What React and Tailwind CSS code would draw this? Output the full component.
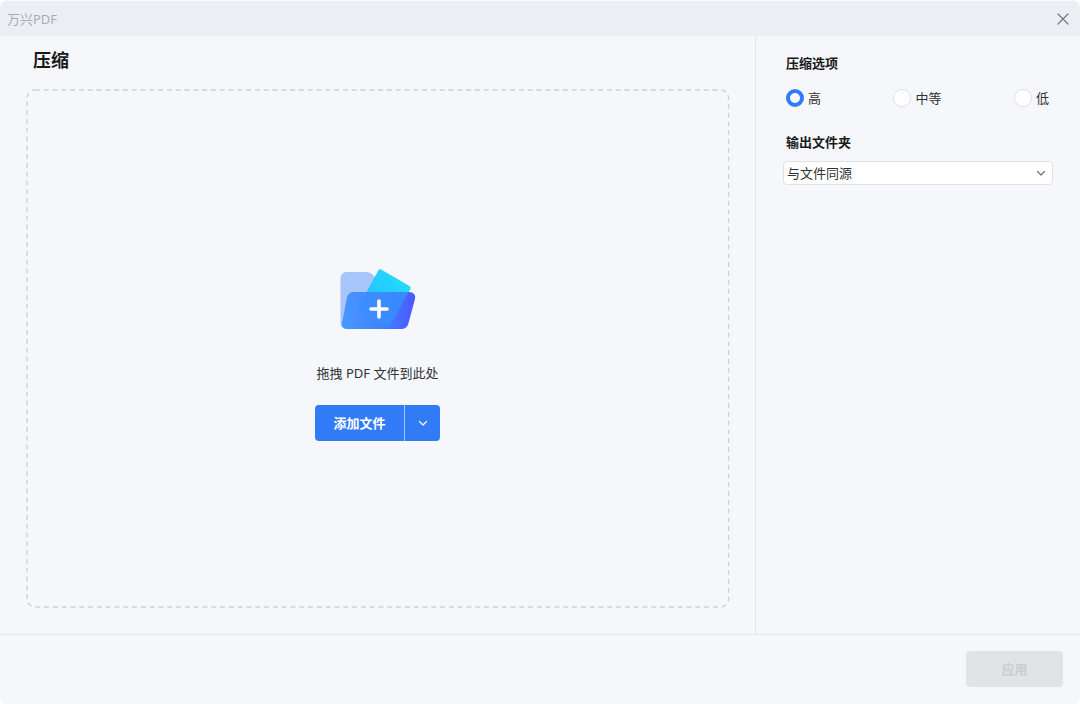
import React, { useState } from 'react';

const levels = [
    { value: 'high', label: '高' },
    { value: 'medium', label: '中等' },
    { value: 'low', label: '低' }
];

function FolderIcon() {
    return (
        <svg width="76" height="62" viewBox="0 0 76 62" fill="none" aria-hidden="true">
            <defs>
                <linearGradient id="sheet" x1="60" y1="8" x2="32" y2="34" gradientUnits="userSpaceOnUse">
                    <stop stopColor="#22dcfd" />
                    <stop offset="1" stopColor="#26c0fd" />
                </linearGradient>
                <linearGradient id="front" x1="4" y1="42" x2="72" y2="42" gradientUnits="userSpaceOnUse">
                    <stop stopColor="#4896ff" />
                    <stop offset="0.55" stopColor="#4183ff" />
                    <stop offset="1" stopColor="#4a5cff" />
                </linearGradient>
                <clipPath id="frontClip">
                    <path d="M13 24H70C74 24 76 27 75 31L68 56C67 59 65 61 62 61H6C3 61 1 58 2 55L7 29C8 26 10 24 13 24Z" />
                </clipPath>
            </defs>
            <path d="M7 4H25C29 4 31 5 33 7L44 18V61H7C3 61 0.5 58.5 0.5 55V10.500C0.500 6.500 3 4 7 4Z" fill="#a8c5fa" />
            <path d="M38.500 2Q39.500 0.800 41.500 1.800L69.500 18Q71.500 19 70.500 21L49 58Q48 60 46 59L19 44Q17 42 18 40Z" fill="url(#sheet)" />
            <path d="M13 24H69C73.500 24 76 27 75 31L68.500 55C67.500 59 65 61 61 61H7C3 61 1 58 2 54.500L7 29.500C8 26 10 24 13 24Z" fill="url(#front)" />
            <path d="M39 2L71 20L50 57Q48.500 60 46 58.500L18 41Z" fill="#3a8dff" fillOpacity="0.85" clipPath="url(#frontClip)" />
            <path d="M39 33V49M31 41H47" stroke="white" strokeWidth="3.600" strokeLinecap="round" />
        </svg>
    );
}

function Chevron({ className }) {
    return (
        <svg width="10" height="10" viewBox="0 0 10 10" fill="none" className={className} aria-hidden="true">
            <path d="M1.5 3.5L5 7L8.5 3.5" stroke="currentColor" strokeWidth="1.2" strokeLinecap="round" strokeLinejoin="round" />
        </svg>
    );
}

export default function App() {
    const [level, setLevel] = useState('high');

    return (
        <div className="flex min-h-screen flex-col overflow-hidden rounded-lg bg-[#f5f7fb] font-['Noto_Sans','Noto_Sans_CJK_SC',sans-serif] text-[13px] leading-5 text-[#303133]">
            <header className="flex h-9 items-center justify-between border-t border-[#fafbfc] bg-[#ebeff3] pr-[11px] pl-[7px]">
                <span className="text-[#a9adb1]">万兴PDF</span>
                <button type="button" aria-label="关闭" className="flex size-3 items-center justify-center text-[#71758b]">
                    <svg width="12" height="12" viewBox="0 0 12 12" fill="none">
                        <path d="M1 1L11 11M11 1L1 11" stroke="currentColor" strokeWidth="1.2" strokeLinecap="round" />
                    </svg>
                </button>
            </header>

            <div className="flex flex-1">
                <main className="flex flex-1 flex-col px-[26px] pt-3 pb-[27px]">
                    <h1 className="mb-[17px] pl-[7px] text-[18px] leading-6 font-bold text-[#1a1a1a]">压缩</h1>
                    <section className="relative flex flex-1 flex-col items-center justify-center pt-3">
                        <svg className="absolute inset-0 size-full overflow-visible text-[#ced1db]" aria-hidden="true">
                            <rect x="1" y="1" width="99.8%" height="99.8%" rx="8" fill="none" stroke="currentColor" strokeWidth="1.4" strokeDasharray="4.8 4" />
                        </svg>
                        <div className="relative flex flex-col items-center">
                            <FolderIcon />
                            <p className="mt-[33px]">拖拽 PDF 文件到此处</p>
                            <div className="mt-[22px] flex h-9 overflow-hidden rounded bg-[#327bf6] text-white">
                                <button type="button" className="w-[90px] border-r border-[#a3c4fb] font-bold">添加文件</button>
                                <button type="button" aria-label="更多添加方式" className="flex w-[35px] items-center justify-center">
                                    <Chevron />
                                </button>
                            </div>
                        </div>
                    </section>
                </main>

                <aside className="w-[325px] border-l border-[#e3e5e9] pt-[17px] pr-[27px] pl-[27px]">
                    <fieldset className="pl-[3px]">
                        <legend className="font-bold text-[#1a1a1a]">压缩选项</legend>
                        <div className="mt-[15px] flex justify-between pr-1">
                            {levels.map((item) => (
                                <label key={item.value} className="flex items-center gap-1">
                                    <input
                                        type="radio"
                                        name="level"
                                        value={item.value}
                                        checked={level === item.value}
                                        onChange={() => setLevel(item.value)}
                                        className="size-[18px] appearance-none rounded-full border border-[#dfe1e4] bg-white checked:border-4 checked:border-[#327bf6]"
                                    />
                                    {item.label}
                                </label>
                            ))}
                        </div>
                    </fieldset>

                    <label htmlFor="folder" className="mt-6 block pl-[3px] font-bold text-[#1a1a1a]">输出文件夹</label>
                    <div className="relative mt-[9px]">
                        <select id="folder" className="block h-6 w-full appearance-none rounded border border-[#dfe1e4] bg-white pr-6 pb-px pl-[3px]">
                            <option>与文件同源</option>
                        </select>
                        <Chevron className="pointer-events-none absolute top-[7px] right-[7px] text-[#707276]" />
                    </div>
                </aside>
            </div>

            <footer className="flex h-[70px] items-start justify-end border-t border-[#e3e5e9] pt-4 pr-[17px]">
                <button type="button" disabled className="h-9 w-[97px] rounded bg-[#e1e3e4] font-bold text-[#cbcdd0]">应用</button>
            </footer>
        </div>
    );
}
